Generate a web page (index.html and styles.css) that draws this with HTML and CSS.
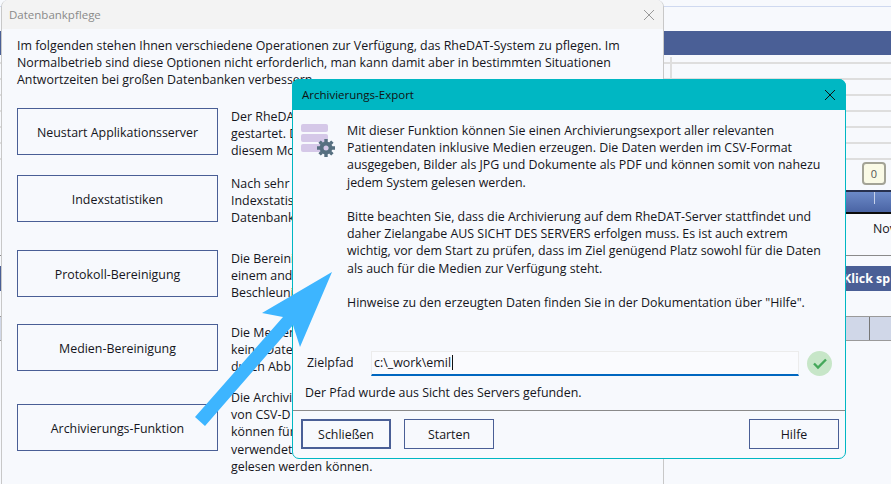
FILE: index.html
```html
<!DOCTYPE html>
<html lang="de">
<head>
  <meta charset="UTF-8" />
  <title>Archivierungs-Export</title>
  <link rel="stylesheet" href="styles.css">
</head>
<body>
  <!-- application behind the dialogs -->
  <div class="app">
    <div class="app-topline"></div>
    <div class="app-band"></div>
    <div class="grid-lines">
      <div class="grid-tick"></div>
      <div class="grid-line"></div>
      <div class="grid-line"></div>
      <div class="grid-line"></div>
      <div class="grid-line"></div>
      <div class="grid-line"></div>
      <div class="grid-line"></div>
      <div class="grid-line"></div>
    </div>
    <div class="slider-row"><span class="slider-badge">0</span></div>
    <div class="slider-bar"><span class="slider-mark"></span></div>
    <div class="app-note">Nov</div>
    <div class="app-click">Klick sp</div>
    <div class="app-cells"><span class="app-cell"></span></div>
  </div>

  <!-- Datenbankpflege window -->
  <section class="window maint">
    <header class="maint-title">
      <span>Datenbankpflege</span>
      <svg class="close" width="12" height="12" viewBox="0 0 12 12"><path d="M1 1l10 10M11 1L1 11" stroke="#999" stroke-width="1" fill="none"/></svg>
    </header>
    <div class="maint-body">
      <p class="maint-intro">Im folgenden stehen Ihnen verschiedene Operationen zur Verfügung, das RheDAT-System zu pflegen. Im<br>Normalbetrieb sind diese Optionen nicht erforderlich, man kann damit aber in bestimmten Situationen<br>Antwortzeiten bei großen Datenbanken verbessern.</p>
      <div class="op op-1">
        <button class="btn op-btn">Neustart Applikationsserver</button>
        <p class="op-text">Der RheDAT<br>gestartet. D<br>diesem Mo</p>
      </div>
      <div class="op op-2">
        <button class="btn op-btn">Indexstatistiken</button>
        <p class="op-text">Nach sehr<br>Indexstatisti<br>Datenbank</p>
      </div>
      <div class="op op-3">
        <button class="btn op-btn">Protokoll-Bereinigung</button>
        <p class="op-text">Die Bereini<br>einem and<br>Beschleuni</p>
      </div>
      <div class="op op-4">
        <button class="btn op-btn">Medien-Bereinigung</button>
        <p class="op-text">Die Medien<br>keine Date<br>durch Abb</p>
      </div>
      <div class="op op-5">
        <button class="btn op-btn">Archivierungs-Funktion</button>
        <p class="op-text op-text-up">Die Archivi<br>von CSV-D<br>können für<br>verwendet<br>gelesen werden können.</p>
      </div>
    </div>
  </section>

  <!-- Archivierungs-Export dialog -->
  <section class="window dialog">
    <header class="dialog-title">
      <span>Archivierungs-Export</span>
      <svg class="close" width="12" height="12" viewBox="0 0 12 12"><path d="M1 1l10 10M11 1L1 11" stroke="#111" stroke-width="1" fill="none"/></svg>
    </header>
    <div class="dialog-main">
      <svg class="dialog-icon" width="40" height="40" viewBox="0 0 40 40">
        <rect x="3" y="2" width="27" height="8" rx="2" fill="#d5c8e8"/>
        <rect x="3" y="12" width="27" height="8" rx="2" fill="#d5c8e8"/>
        <rect x="3" y="22" width="27" height="8" rx="2" fill="#d5c8e8"/>
        <circle cx="28" cy="26" r="4.500" fill="none" stroke="#566f80" stroke-width="4"/>
        <path d="M28 17v3M28 32v3M19 26h3M34 26h3M21.600 19.600l2.200 2.200M32.200 30.200l2.200 2.200M34.400 19.600l-2.200 2.200M23.800 30.200l-2.200 2.200" stroke="#566f80" stroke-width="3.400" fill="none"/>
      </svg>
      <div class="dialog-text">
        <p>Mit dieser Funktion können Sie einen Archivierungsexport aller relevanten<br>Patientendaten inklusive Medien erzeugen. Die Daten werden im CSV-Format<br>ausgegeben, Bilder als JPG und Dokumente als PDF und können somit von nahezu<br>jedem System gelesen werden.</p>
        <p>Bitte beachten Sie, dass die Archivierung auf dem RheDAT-Server stattfindet und<br>daher Zielangabe AUS SICHT DES SERVERS erfolgen muss. Es ist auch extrem<br>wichtig, vor dem Start zu prüfen, dass im Ziel genügend Platz sowohl für die Daten<br>als auch für die Medien zur Verfügung steht.</p>
        <p>Hinweise zu den erzeugten Daten finden Sie in der Dokumentation über "Hilfe".</p>
      </div>
    </div>
    <div class="path-row">
      <label class="path-label">Zielpfad</label>
      <div class="path-input"><span>c:\_work\emil</span><i class="caret"></i></div>
      <span class="path-ok">
        <svg width="16" height="16" viewBox="0 0 16 16"><path d="M2 8.500l4 4 8-8" stroke="#45a85a" stroke-width="2.400" fill="none"/></svg>
      </span>
    </div>
    <p class="path-status">Der Pfad wurde aus Sicht des Servers gefunden.</p>
    <footer class="dialog-foot">
      <button class="btn foot-btn is-default">Schließen</button>
      <button class="btn foot-btn">Starten</button>
      <button class="btn foot-btn foot-help">Hilfe</button>
    </footer>
  </section>

  <!-- annotation arrow -->
  <svg class="arrow" width="891" height="484" viewBox="0 0 891 484">
    <path d="M332 272L262 313L283 317L195 417L205 426L293 325L300 347Z" fill="#3db5ff"/>
  </svg>
</body>
</html>
```
FILE: styles.css
```css
html, body {
  margin: 0; padding: 0;
  width: 891px; height: 484px;
  overflow: hidden;
  background: #f7f9fd;
  font-family: "Open Sans", sans-serif;
  font-size: 12.4px;
  line-height: 17.2px;
  color: #151520;
}
p { margin: 0; white-space: nowrap; }

.window { position: absolute; box-sizing: border-box; background: #f7f9fd; }
.btn {
  box-sizing: border-box;
  padding: 0;
  border: 1px solid #4a5f96;
  background: #f7f9fd;
  font: inherit;
  color: inherit;
  text-align: center;
}

/* background app */
.app { display: flex; flex-direction: column; height: 484px; box-sizing: border-box; }
.app-topline { height: 1px; margin-top: 6px; background: #cfd9f0; }
.app-band { height: 24px; margin-top: 24px; background: #4a5f96; }
.grid-lines { position: relative; padding-top: 7px; }
.grid-line { height: 2px; margin-bottom: 14px; background: #dedede; }
.grid-tick { position: absolute; left: 670px; top: 2px; width: 2px; height: 22px; background: #dedede; }
.slider-row { display: flex; justify-content: flex-end; height: 0; }
.slider-badge {
  flex: none;
  box-sizing: border-box;
  width: 24px; height: 23px;
  margin: -12px 5px 0 0;
  border: 2px solid #a3a396;
  border-radius: 4px;
  background: #fafae6;
  text-align: center;
  line-height: 19px;
  font-size: 11px;
  color: #555;
}
.slider-bar {
  position: relative;
  height: 24px;
  margin: 16px 0 0 1px;
  box-sizing: border-box;
  border-top: 2px solid #27314f;
  border-bottom: 2px solid #0b0b0b;
  background: linear-gradient(#6c8ac8, #4a64a4);
}
.slider-mark { position: absolute; left: 873px; top: 0; width: 1px; height: 12px; background: #c7d2ea; }
.app-note {
  height: 42px;
  padding-left: 873px;
  line-height: 30px;
  white-space: nowrap;
  border-bottom: 1px solid #8a8a8a;
  box-sizing: border-box;
}
.app-click {
  height: 25px;
  margin-top: 10px;
  padding-left: 843px;
  background: #4a5f96;
  color: #fff;
  font-weight: 700;
  line-height: 25px;
  white-space: nowrap;
}
.app-cells {
  height: 25px;
  margin-top: 25px;
  box-sizing: border-box;
  border-top: 1px solid #9a9a9a;
  border-bottom: 1px solid #9a9a9a;
  background: #d0d7e8;
}
.app-cell { display: block; width: 869px; height: 100%; border-right: 1px solid #777; }

/* Datenbankpflege window */
.maint {
  left: 1px; top: 0;
  width: 663px; height: 484px;
  border-left: 1px solid #c8c8c8;
  border-right: 1px solid #c8c8c8;
  border-radius: 7px 7px 0 0;
}
.maint-title {
  display: flex;
  justify-content: space-between;
  align-items: center;
  height: 29px;
  padding: 0 8px 0 7px;
  background: #f3f3f3;
  color: #8a8a8a;
  font-size: 11.5px;
  border-radius: 7px 7px 0 0;
}
.maint-body { padding: 8px 15px 0; }
.op { display: flex; gap: 13px; height: 47px; }
.op-1 { margin-top: 19.4px; }
.op-2 { margin-top: 20px; }
.op-3 { margin-top: 28px; }
.op-4 { margin-top: 27px; }
.op-5 { margin-top: 33px; }
.op-btn { flex: none; width: 201px; height: 47px; padding-top: 2px; }
.op-text-up { margin-top: -15px; }

/* Archivierungs-Export dialog */
.dialog {
  left: 292px; top: 79px;
  width: 554px; height: 380px;
  border: 1px solid #00b7c3;
  border-radius: 7px;
}
.dialog-title {
  display: flex;
  justify-content: space-between;
  align-items: center;
  height: 31px;
  margin: -1px -1px 0;
  padding: 0 10px;
  background: #00b7c3;
  border-radius: 7px 7px 0 0;
  color: #111;
  font-size: 11.5px;
}
.dialog-main { display: flex; height: 240px; padding: 12px 0 0 5px; box-sizing: border-box; }
.dialog-icon { flex: none; }
.dialog-text { margin-left: 9px; }
.dialog-text p { margin-bottom: 17.200px; }

.path-row { display: flex; align-items: center; height: 26px; padding-left: 14px; }
.path-label { width: 64px; }
.path-input {
  display: flex;
  align-items: center;
  box-sizing: border-box;
  width: 428px; height: 25px;
  padding-left: 2px;
  border: 1px solid #ececec;
  border-bottom: 2px solid #0067c0;
  background: #fafbfe;
}
.caret { width: 1px; height: 15px; margin-left: 1px; background: #111; }
.path-ok {
  display: flex;
  align-items: center;
  justify-content: center;
  width: 25px; height: 25px;
  margin-left: 8px;
  border-radius: 50%;
  background: #c7e6c8;
}
.path-status { margin: 8px 0 0 12px; }
.dialog-foot {
  display: flex;
  gap: 13px;
  margin-top: 9px;
  padding: 8px 6px 0 8px;
  border-top: 1px solid #8a8a8a;
}
.foot-btn { width: 90px; height: 30px; }
.foot-btn.is-default { border-width: 2px; }
.foot-help { margin-left: auto; }

.close { flex: none; }
.arrow { position: absolute; left: 0; top: 0; pointer-events: none; }
```
